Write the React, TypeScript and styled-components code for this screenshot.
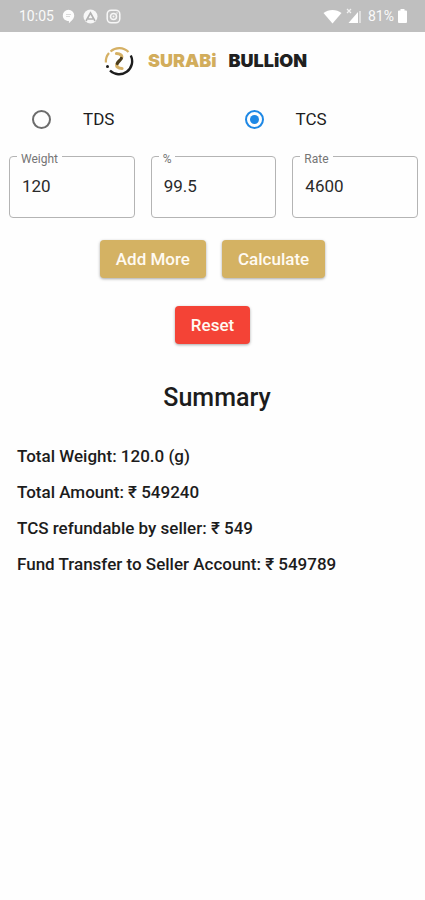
import React, { useState } from "react";
import styled, { createGlobalStyle } from "styled-components";

const GlobalStyle = createGlobalStyle`
  * { box-sizing: border-box; }
  body {
    margin: 0;
    background: #fefefe;
    color: #1c1c1c;
    font-family: Roboto, "Noto Sans", sans-serif;
  }
`;

const StatusBar = styled.header`
  display: flex;
  align-items: center;
  justify-content: space-between;
  height: 32px;
  padding: 0 18px 0 19px;
  background: #bfbfbf;
  color: #fafafa;
  font-size: 14px;
  line-height: 16px;
`;

const StatusGroup = styled.div<{ $gap: number }>`
  display: flex;
  align-items: center;
  gap: ${(p) => p.$gap}px;
  svg { display: block; }
`;

const Brand = styled.h1`
  display: flex;
  align-items: center;
  justify-content: center;
  height: 58px;
  margin: 0;
  padding-right: 14px;
  font-family: Inter, sans-serif;
  font-size: 18px;
  font-weight: 900;
  line-height: 24px;
  svg { margin-right: 14px; }
`;

const BrandWord = styled.span<{ $color: string }>`
  color: ${(p) => p.$color};
  & + & { margin-left: 12px; }
`;

const TaxOptions = styled.div`
  display: grid;
  grid-template-columns: 1fr 1fr;
`;

const Option = styled.label`
  display: flex;
  align-items: center;
  gap: 32px;
  height: 58px;
  padding-left: 32px;
  font-size: 17px;
  line-height: 20px;
  cursor: pointer;
`;

const Radio = styled.input`
  appearance: none;
  display: grid;
  place-items: center;
  width: 19px;
  height: 19px;
  margin: 0;
  border: 2px solid #6c6c6c;
  border-radius: 50%;
  &:checked { border-color: #1e88e5; }
  &:checked::before {
    content: "";
    width: 9px;
    height: 9px;
    border-radius: 50%;
    background: #1e88e5;
  }
`;

const Fields = styled.div`
  display: grid;
  grid-template-columns: repeat(3, 1fr);
  gap: 16px;
  padding: 8px 7px 0 9px;
`;

const Field = styled.div`
  position: relative;
`;

const FieldLabel = styled.label`
  position: absolute;
  top: -4px;
  left: 8px;
  padding: 0 4px;
  background: #fefefe;
  color: #757575;
  font-size: 12px;
  line-height: 14px;
`;

const FieldInput = styled.input`
  display: block;
  width: 100%;
  height: 62px;
  padding: 0 12px 2px;
  border: 1px solid #b4b4b4;
  border-radius: 4px;
  background: transparent;
  color: #2a2a2a;
  font-family: inherit;
  font-size: 17px;
  outline: none;
`;

const ButtonRow = styled.div`
  display: flex;
  justify-content: center;
  gap: 16px;
  padding: 22px 0 0;
  & + & { padding-top: 28px; }
`;

const Button = styled.button<{ $color: string }>`
  height: 38px;
  padding: 0 16px;
  border: 0;
  border-radius: 4px;
  background: ${(p) => p.$color};
  box-shadow: 0 1px 3px rgba(0, 0, 0, 0.35);
  color: #fffaf2;
  font-family: inherit;
  font-size: 17px;
  font-weight: 500;
  cursor: pointer;
`;

const SummaryTitle = styled.h2`
  margin: 38px 0 0;
  padding-left: 9px;
  font-size: 25px;
  font-weight: 500;
  line-height: 32px;
  text-align: center;
`;

const SummaryList = styled.div`
  display: grid;
  gap: 16px;
  padding: 32px 17px;
`;

const SummaryLine = styled.p`
  margin: 0;
  font-size: 17px;
  font-weight: 500;
  line-height: 20px;
`;

const GOLD = "#d4b263";

function StatusIcons() {
  return (
    <>
      <svg width="13" height="15" viewBox="0 0 13 15" aria-hidden="true">
        <path d="M6.500.8a5.700 5.700 0 0 1 5.700 5.700c0 3.500-3 5.500-5.300 7.700V12C3 12 .8 9.500.8 6.500A5.700 5.700 0 0 1 6.500.8Z" fill="#fcfcfc" />
        <path d="M4 5.500h5M4 7.500h4" stroke="#dadada" strokeWidth="1" />
      </svg>
      <svg width="15" height="15" viewBox="0 0 15 15" aria-hidden="true">
        <circle cx="7.500" cy="7.500" r="7" fill="#f7f7f7" />
        <path d="M3 12 7.500 4l4.500 8M5 10h5" fill="none" stroke="#b2b2b2" strokeWidth="1.600" />
      </svg>
      <svg width="15" height="15" viewBox="0 0 15 15" fill="none" stroke="#f7f7f7" aria-hidden="true">
        <rect x="1.200" y="1.200" width="12.600" height="12.600" rx="4" strokeWidth="1.500" />
        <circle cx="7.500" cy="7.500" r="3" strokeWidth="1.500" />
        <circle cx="7.500" cy="7.500" r="1" fill="#f7f7f7" stroke="none" />
        <circle cx="11" cy="4" r=".7" fill="#f7f7f7" stroke="none" />
      </svg>
    </>
  );
}

function SignalIcons() {
  return (
    <>
      <svg width="19" height="15" viewBox="0 0 19 15" aria-hidden="true">
        <path d="M.5 4C5.500.1 13.500.1 18.500 4L9.500 14.500Z" fill="#fff" />
      </svg>
      <svg width="18" height="16" viewBox="0 0 18 16" aria-hidden="true">
        <path d="M12 4v11H2.500Z" fill="#fff" />
        <path d="M14 3v12" stroke="#dedede" strokeWidth="2" />
        <path d="m1 1 4 4M5 1 1 5" stroke="#f2f2f2" strokeWidth="1.200" />
      </svg>
    </>
  );
}

function BrandMark() {
  return (
    <svg width="30" height="30" viewBox="0 0 30 30" fill="none" aria-hidden="true">
      <path d="M1.900 16.500A13 13 0 0 1 5 7M6.500 5.500A13 13 0 0 1 24.500 6" stroke="#d5b064" strokeWidth="2.200" />
      <path d="M26.800 9.500A13 13 0 0 1 6 24.500" stroke="#1d1d1d" strokeWidth="2.400" />
      <circle cx="3.500" cy="20.500" r="1.500" fill="#1d1d1d" />
      <path d="M12.500 7.500c4 0 6 2 5 4.500" stroke="#d5b064" strokeWidth="3.200" strokeLinecap="round" />
      <path d="M18 22.500c-4 0-6-2-5-4.500" stroke="#d5b064" strokeWidth="3.200" strokeLinecap="round" />
      <path d="M17.300 12.500c-.8 1.900-3.300 2.900-4 5" stroke="#4a3c1c" strokeWidth="3.200" strokeLinecap="round" />
    </svg>
  );
}

const fields = [
  { id: "weight", label: "Weight", value: "120" },
  { id: "purity", label: "%", value: "99.5" },
  { id: "rate", label: "Rate", value: "4600" },
];

const summary = [
  "Total Weight: 120.0 (g)",
  "Total Amount: ₹ 549240",
  "TCS refundable by seller: ₹ 549",
  "Fund Transfer to Seller Account: ₹ 549789",
];

export default function App() {
  const [tax, setTax] = useState("TCS");
  return (
    <>
      <GlobalStyle />
      <StatusBar>
        <StatusGroup $gap={8}>
          <span>10:05</span>
          <StatusIcons />
        </StatusGroup>
        <StatusGroup $gap={4}>
          <SignalIcons />
          <StatusGroup $gap={4}>
            <span>81%</span>
            <svg width="9" height="14" viewBox="0 0 9 14" aria-hidden="true">
              <path d="M2.500 0h4v1.500H8q1 0 1 1V13q0 1-1 1H1q-1 0-1-1V2.500q0-1 1-1h1.500Z" fill="#fff" />
            </svg>
          </StatusGroup>
        </StatusGroup>
      </StatusBar>
      <main>
        <Brand>
          <BrandMark />
          <BrandWord $color="#d2ad5c">SURABi</BrandWord>
          <BrandWord $color="#202020">BULLiON</BrandWord>
        </Brand>
        <TaxOptions role="radiogroup" aria-label="Tax type">
          {["TDS", "TCS"].map((name) => (
            <Option key={name}>
              <Radio type="radio" name="tax" checked={tax === name} onChange={() => setTax(name)} />
              {name}
            </Option>
          ))}
        </TaxOptions>
        <Fields>
          {fields.map((f) => (
            <Field key={f.id}>
              <FieldInput id={f.id} defaultValue={f.value} inputMode="decimal" />
              <FieldLabel htmlFor={f.id}>{f.label}</FieldLabel>
            </Field>
          ))}
        </Fields>
        <ButtonRow>
          <Button type="button" $color={GOLD}>Add More</Button>
          <Button type="button" $color={GOLD}>Calculate</Button>
        </ButtonRow>
        <ButtonRow>
          <Button type="button" $color="#f44336">Reset</Button>
        </ButtonRow>
        <SummaryTitle>Summary</SummaryTitle>
        <SummaryList>
          {summary.map((line) => (
            <SummaryLine key={line}>{line}</SummaryLine>
          ))}
        </SummaryList>
      </main>
    </>
  );
}
